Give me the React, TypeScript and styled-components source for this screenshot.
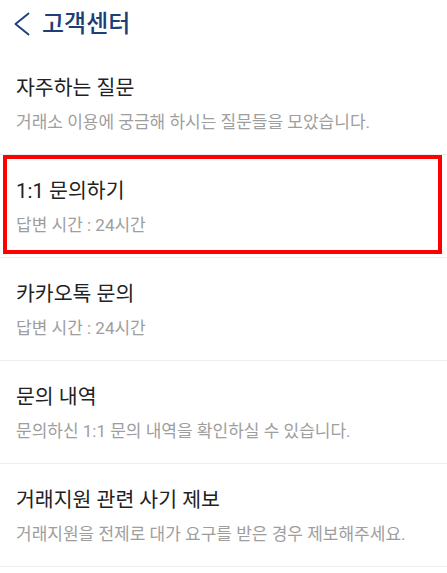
import styled, { createGlobalStyle } from "styled-components";

const GlobalStyle = createGlobalStyle`
    html, body {
        margin: 0;
        padding: 0;
        background-color: #ffffff;
    }
    body {
        font-family: Roboto, "Noto Sans CJK KR", sans-serif;
    }
`;

const menu = [
    { title: "자주하는 질문", desc: "거래소 이용에 궁금해 하시는 질문들을 모았습니다." },
    { title: "1:1 문의하기", desc: "답변 시간 : 24시간", marked: true },
    { title: "카카오톡 문의", desc: "답변 시간 : 24시간" },
    { title: "문의 내역", desc: "문의하신 1:1 문의 내역을 확인하실 수 있습니다." },
    { title: "거래지원 관련 사기 제보", desc: "거래지원을 전제로 대가 요구를 받은 경우 제보해주세요." },
];

export default function App() {
    return (
        <Page>
            <GlobalStyle />
            <Header>
                <BackButton aria-label="뒤로">
                    <svg width="17" height="24" viewBox="0 0 17 24" fill="none">
                        <polyline
                            points="15.5,1.5 2.5,12 15.5,22.5"
                            stroke="#1d3f78"
                            strokeWidth="1.9"
                            strokeLinecap="round"
                            strokeLinejoin="round"
                        />
                    </svg>
                </BackButton>
                <Title>고객센터</Title>
            </Header>
            <List>
                {menu.map((item, index) => (
                    <Item key={index}>
                        <ItemTitle>{item.title}</ItemTitle>
                        <ItemDesc>{item.desc}</ItemDesc>
                        {item.marked && <Highlight />}
                    </Item>
                ))}
            </List>
        </Page>
    );
}

const Page = styled.div`
    width: 447px;
    min-height: 573px;
    background-color: #ffffff;
`;

const Header = styled.div`
    height: 52px;
    display: flex;
    align-items: center;
    gap: 12px;
    padding: 0 0 0 13px;
    box-sizing: border-box;
`;

const BackButton = styled.button`
    display: flex;
    align-items: center;
    justify-content: center;
    padding: 0;
    border: none;
    background: none;
    cursor: pointer;
    margin-top: -4px;
`;

const Title = styled.h1`
    margin: 0;
    margin-top: -4px;
    font-size: 24px;
    font-weight: 500;
    color: #1d3f78;
    line-height: 30px;
`;

const List = styled.ul`
    list-style: none;
    margin: 0;
    padding: 0;
`;

const Item = styled.li`
    position: relative;
    padding: 23px 16px 21px;
    border-bottom: 1px solid #eeeeee;
`;

const ItemTitle = styled.div`
    font-size: 20.5px;
    line-height: 26px;
    color: #222222;
`;

const ItemDesc = styled.div`
    margin-top: 10px;
    font-size: 17px;
    line-height: 22px;
    color: #9e9e9e;
`;

const Highlight = styled.div`
    position: absolute;
    top: 0;
    left: 3px;
    right: 5px;
    bottom: 3px;
    border: 4px solid #ff0000;
    pointer-events: none;
`;
